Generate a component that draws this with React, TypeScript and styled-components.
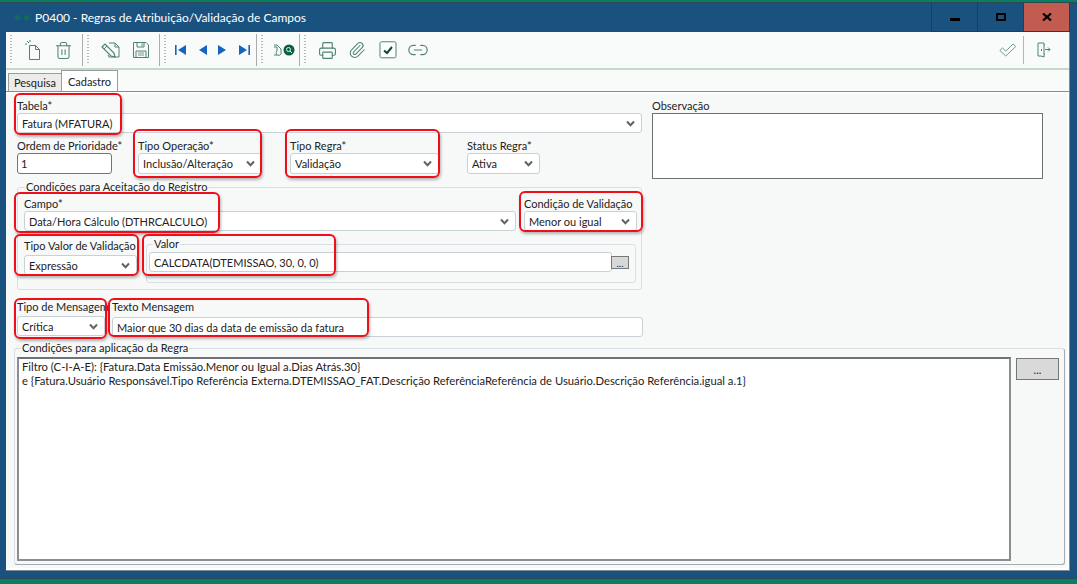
import React from "react";
import styled, { createGlobalStyle } from "styled-components";
import { Trash2, Printer, Paperclip, Link2 } from "lucide-react";

const Global = createGlobalStyle`
  html, body { margin: 0; padding: 0; }
  body { width: 1077px; height: 584px; overflow: hidden; background: #19527f; font-family: "Lato", "Liberation Sans", sans-serif; font-size: 11px; color: #222; }
  fieldset { margin: 0; min-width: 0; }
`;

const Shell = styled.div`
  width: 1077px; height: 584px; display: flex; flex-direction: column; background: #19527f;
`;
const TopStrip = styled.div`height: 2px; background: #0b7d63; border-bottom: 1px solid #2c4a50;`;
const BottomStrip = styled.div`height: 5px; background: #0b7d63; border-top: 1px solid #2c4a50;`;
const BottomSpacer = styled.div`height: 7px;`;
const TitleBar = styled.div`
  height: 29px; display: flex; align-items: center; padding-left: 15px; color: #fff; font-size: 12px;
`;
const Dots = styled.span`display: flex; gap: 4px; margin-right: 6px;`;
const Dot = styled.i`width: 5px; height: 5px; border-radius: 50%; background: #0d6f5b;`;
const Title = styled.span`flex: 1;`;
const WinButtons = styled.div`display: flex; height: 29px; margin-right: 7px; border-left: 1px solid #33383c; border-bottom: 1px solid #33383c; box-sizing: border-box;`;
const WinButton = styled.button<{ $close?: boolean }>`
  width: 46px; height: 28px; border: 0; border-right: 1px solid #33383c; padding: 0; display: flex; align-items: center; justify-content: center;
  background: ${(p) => (p.$close ? "#c25b50" : "#19527f")};
`;
const Frame = styled.div`
  flex: 1; margin: 0 7px 0 6px; background: #fff; display: flex; flex-direction: column; border-bottom: 1px solid #7d8a96; border-right: 1px solid #7d8a96; position: relative;
`;
const Toolbar = styled.div`
  height: 36px; background: #f9fbfa; display: flex; align-items: center; border-bottom: 2px solid #c6d8c6; box-sizing: content-box;
`;
const ToolGroup = styled.div<{ $w: number; $last?: boolean }>`
  width: ${(p) => p.$w}px; height: 32px; box-sizing: border-box; display: flex; align-items: center; padding-left: 4px;
  border-right: ${(p) => (p.$last ? "0" : "1px solid #a9adae")}; flex: none;
`;
const Grip = styled.span`
  width: 2px; height: 30px; margin-right: 5px; flex: none;
  background-image: linear-gradient(#b4b8b8 50%, transparent 50%); background-size: 2px 3px;
`;
const ToolIcon = styled.span<{ $w: number }>`
  width: ${(p) => p.$w}px; display: flex; justify-content: center; align-items: center; flex: none; color: #4f8371;
`;
const ToolSpacer = styled.div`flex: 1;`;
const RightTools = styled.div`display: flex; align-items: center; height: 32px; margin-right: 18px;`;
const ThinSep = styled.span`width: 1px; height: 28px; background: #b3b6b6; margin: 0 13px 0 6px;`;
const TabRow = styled.div`
  height: 21px; padding-left: 2px; background: #f9fbfa; display: flex; align-items: flex-end; border-bottom: 1px solid #8b8d90; box-sizing: content-box;
`;
const Tab = styled.div<{ $active?: boolean }>`
  box-sizing: border-box; display: flex; align-items: center; justify-content: center;
  width: ${(p) => (p.$active ? 57 : 54)}px; height: ${(p) => (p.$active ? 21 : 18)}px;
  background: ${(p) => (p.$active ? "#fff" : "#ececec")};
  border: 1px solid #9a9c9e; border-bottom: 0; margin-left: ${(p) => (p.$active ? -1 : 0)}px; position: relative; color: #222;
`;
const Panel = styled.div`
  flex: 1; background: #f7f9f9; margin: 2px 2px 2px 0; padding: 5px 0 0 7px; position: relative;
`;
const TopSection = styled.div`display: flex; padding-left: 4px;`;
const LeftCol = styled.div`width: 625px; flex: none;`;
const ObsCol = styled.div`margin-left: 10px;`;
const Row = styled.div<{ $mt?: number; $gap?: number; $pl?: number }>`
  display: flex; margin-top: ${(p) => p.$mt ?? 0}px; gap: ${(p) => p.$gap ?? 0}px; padding-left: ${(p) => p.$pl ?? 0}px;
`;
const Field = styled.div<{ $w?: number; $grow?: boolean; $ml?: number; $mt?: number }>`
  width: ${(p) => (p.$w ? `${p.$w}px` : "auto")}; ${(p) => (p.$grow ? "flex: 1;" : "flex: none;")}
  margin-left: ${(p) => p.$ml ?? 0}px; margin-top: ${(p) => p.$mt ?? 0}px;
`;
const Label = styled.label<{ $gap?: number }>`
  display: block; height: 14px; line-height: 14px; margin-bottom: ${(p) => p.$gap ?? 0}px; white-space: nowrap;
`;
const Box = styled.div<{ $h?: number; $radius?: number; $border?: string; $w?: number; $pad?: number }>`
  box-sizing: border-box; height: ${(p) => p.$h ?? 20}px; ${(p) => p.$w && `width: ${p.$w}px;`} background: #fff; display: flex; align-items: center; padding: 0 6px 0 ${(p) => p.$pad ?? 4}px; white-space: nowrap;
  border: 1px solid ${(p) => p.$border ?? "#c8d1d6"}; border-radius: ${(p) => p.$radius ?? 3}px; color: #222;
`;
const BoxText = styled.span`flex: 1; overflow: hidden;`;
const Observacao = styled.div`width: 391px; height: 66px; box-sizing: border-box; background: #fff; border: 1px solid #6d6f72;`;
const Group = styled.fieldset<{ $w: number; $h: number; $legendLeft: number; $ml?: number; $strong?: boolean }>`
  box-sizing: border-box; width: ${(p) => p.$w}px; height: ${(p) => p.$h}px; padding: 0; flex: none; margin-left: ${(p) => p.$ml ?? 0}px;
  border: 1px solid #d8dee1; border-radius: 3px;
  ${(p) => p.$strong && "border-right-color: #a6abae; border-bottom-color: #a6abae;"}
  & > legend { margin-left: ${(p) => p.$legendLeft}px; padding: 0 1px; height: 14px; line-height: 14px; }
`;
const ValorRow = styled.div`display: flex; align-items: flex-start; padding-left: 2px; margin-top: 1px;`;
const EllipsisSmall = styled.button`
  width: 18px; height: 13px; margin: 4px 0 0 -1px; box-sizing: border-box; background: #d8d8d8; border: 1px solid #777; padding: 0; font: inherit; font-size: 10px; line-height: 8px; color: #222;
  position: relative;
`;
const RuleBody = styled.div`display: flex; align-items: flex-start; padding: 2px 0 0 2px;`;
const RuleText = styled.div`
  width: 994px; height: 204px; box-sizing: border-box; background: #fff; border: 2px solid #8a8d92; border-top-color: #6f7276; padding: 1px 3px; line-height: 13.5px; font-size: 11.25px; flex: none;
`;
const EllipsisLarge = styled.button`
  width: 43px; height: 22px; margin: 1px 0 0 5px; box-sizing: border-box; background: #d9d9d9; border: 1px solid #777; padding: 0; font: inherit; color: #222;
`;
const Highlight = styled.div<{ $x: number; $y: number; $w: number; $h: number }>`
  position: absolute; left: ${(p) => p.$x}px; top: ${(p) => p.$y}px; width: ${(p) => p.$w}px; height: ${(p) => p.$h}px;
  box-sizing: border-box; border: 2px solid #ee0f1a; border-radius: 6px; box-shadow: 1px 2px 3px rgba(0,0,0,.28); pointer-events: none;
`;

const Chevron = () => (
  <svg width="9" height="7" viewBox="0 0 9 7"><path d="M1 1.5 4.5 5.2 8 1.5" fill="none" stroke="#5f6468" strokeWidth="2" /></svg>
);
const Select = ({ value, h }: { value?: string; h?: number }) => (
  <Box $h={h}><BoxText>{value}</BoxText><Chevron /></Box>
);
const stroke = { fill: "none", stroke: "#4f8371", strokeWidth: 1 } as const;

const NewDoc = () => (
  <svg width="20" height="22" viewBox="0 0 20 22" {...stroke}>
    <path d="M5.500 6.500h6l4 4v10h-10z" /><path d="M11.500 6.500v4h4" /><path d="M3 2l2 2M6 1v2M1 5h2" stroke="#2f8a6a" />
  </svg>
);
const EditDoc = () => (
  <svg width="20" height="20" viewBox="0 0 20 20" {...stroke}>
    <path d="M8 3h6l4 4v10H8l-1-2" /><path d="M14 3v4h4" /><path d="M1 7l3-3 9 9 1 4-4-1z" strokeWidth="1.2" /><path d="M3 9l3-3" />
  </svg>
);
const Floppy = () => (
  <svg width="16" height="16" viewBox="0 0 16 16" {...stroke}>
    <path d="M.5.5h12.500l2.500 2.500v12.500H.5z" /><path d="M4 .5v4.500h7V.5M9 1.500v2.500" /><path d="M3 15.500V9h10v6.500" />
    <path d="M5 11h6M5 13h6" strokeWidth=".8" />
  </svg>
);
const Tri = ({ dir, bar }: { dir: "l" | "r"; bar?: boolean }) => (
  <svg width="12" height="10" viewBox="0 0 12 10" fill="#1565c0">
    {dir === "l" ? <path d="M11 0v10L3 5z" /> : <path d="M1 0v10l8-5z" />}
    {bar && (dir === "l" ? <rect x="0" y="0" width="1.6" height="10" /> : <rect x="10.4" y="0" width="1.6" height="10" />)}
  </svg>
);
const Binoc = () => (
  <svg width="22" height="14" viewBox="0 0 22 14">
    <path d="M1 2h3l4 4v3a2.500 2.500 0 1 1-4-1V4H1M1 12h3" fill="none" stroke="#4f8371" />
    <circle cx="16" cy="7" r="5.500" fill="#0d5c48" />
    <circle cx="15.500" cy="6.500" r="2" fill="none" stroke="#cfe" strokeWidth="1" /><path d="M17 8l2 2" stroke="#cfe" />
  </svg>
);
const CheckSquare = () => (
  <svg width="18" height="18" viewBox="0 0 18 18">
    <rect x="1" y=".8" width="16" height="16" rx="1.500" fill="#fff" stroke="#4f8371" />
    <path d="M5 9.500 8 12l5-6" fill="none" stroke="#0d4a3a" strokeWidth="2" />
  </svg>
);
const HollowCheck = () => (
  <svg width="18" height="14" viewBox="0 0 18 14" fill="none" stroke="#6f9d8d" strokeWidth="1">
    <path d="M.800 7.500 3.500 5 6.800 8.200 14 1l2.700 2.500L6.800 13z" />
  </svg>
);
const ExitDoor = () => (
  <svg width="14" height="16" viewBox="0 0 14 16" {...stroke}>
    <path d="M1 1h6v14l-3-1H1zM7 3h1M7 12h1M8 7.500h5M11 5.500l2 2-2 2" /><path d="M4.500 7v2" />
  </svg>
);

const marks: [number, number, number, number][] = [
  [8, -1, 108, 42],
  [127, 35, 129, 49],
  [279, 35, 155, 49],
  [8, 98, 206, 41],
  [513, 97, 124, 41],
  [8, 140, 125, 42],
  [136, 140, 194, 42],
  [8, 204, 93, 41],
  [102, 204, 261, 39],
];

export default function App() {
  return (
    <Shell>
      <Global />
      <TopStrip />
      <TitleBar>
        <Dots><Dot /><Dot /></Dots>
        <Title>P0400 - Regras de Atribuição/Validação de Campos</Title>
        <WinButtons>
          <WinButton aria-label="Minimizar"><svg width="10" height="8"><rect y="5" width="10" height="3" fill="#000" /></svg></WinButton>
          <WinButton aria-label="Maximizar"><svg width="10" height="8"><rect x="1" y="1" width="8" height="6" fill="none" stroke="#000" strokeWidth="2" /></svg></WinButton>
          <WinButton $close aria-label="Fechar"><svg width="10" height="8"><path d="M1 .5l8 7M9 .5l-8 7" stroke="#000" strokeWidth="2.200" /></svg></WinButton>
        </WinButtons>
      </TitleBar>
      <Frame>
        <Toolbar>
          <ToolGroup $w={77}><Grip /><ToolIcon $w={34}><NewDoc /></ToolIcon><ToolIcon $w={24}><Trash2 size={19} strokeWidth={1.3} /></ToolIcon></ToolGroup>
          <ToolGroup $w={77}><Grip /><ToolIcon $w={34}><EditDoc /></ToolIcon><ToolIcon $w={26}><Floppy /></ToolIcon></ToolGroup>
          <ToolGroup $w={97}><Grip /><ToolIcon $w={20}><Tri dir="l" bar /></ToolIcon><ToolIcon $w={22}><Tri dir="l" /></ToolIcon><ToolIcon $w={20}><Tri dir="r" /></ToolIcon><ToolIcon $w={22}><Tri dir="r" bar /></ToolIcon></ToolGroup>
          <ToolGroup $w={43}><Grip /><ToolIcon $w={32}><Binoc /></ToolIcon></ToolGroup>
          <ToolGroup $w={140} $last><Grip /><ToolIcon $w={32}><Printer size={19} strokeWidth={1.4} /></ToolIcon><ToolIcon $w={28}><Paperclip size={18} strokeWidth={1.4} /></ToolIcon><ToolIcon $w={34}><CheckSquare /></ToolIcon><ToolIcon $w={26}><Link2 size={22} strokeWidth={1.3} /></ToolIcon></ToolGroup>
          <ToolSpacer />
          <RightTools>
            <ToolIcon $w={18}><HollowCheck /></ToolIcon>
            <ThinSep />
            <ToolIcon $w={14}><ExitDoor /></ToolIcon>
          </RightTools>
        </Toolbar>
        <TabRow>
          <Tab>Pesquisa</Tab>
          <Tab $active>Cadastro</Tab>
        </TabRow>
        <Panel>
          <TopSection>
            <LeftCol>
              <Field>
                <Label>Tabela*</Label>
                <Select value="Fatura (MFATURA)" />
              </Field>
              <Row $mt={6}>
                <Field $w={95}>
                  <Label>Ordem de Prioridade*</Label>
                  <Box $h={21} $border="#5c8268" $pad={3}>1</Box>
                </Field>
                <Field $w={124} $ml={26}>
                  <Label>Tipo Operação*</Label>
                  <Select value="Inclusão/Alteração" h={21} />
                </Field>
                <Field $w={149} $ml={28}>
                  <Label>Tipo Regra*</Label>
                  <Select value="Validação" h={21} />
                </Field>
                <Field $w={73} $ml={28}>
                  <Label>Status Regra*</Label>
                  <Select value="Ativa" h={21} />
                </Field>
              </Row>
            </LeftCol>
            <ObsCol>
              <Label>Observação</Label>
              <Observacao />
            </ObsCol>
          </TopSection>
          <Row $mt={1} $pl={4}>
            <Group $w={625} $h={110} $legendLeft={7}>
              <legend>Condições para Aceitação do Registro</legend>
              <Row $mt={3} $pl={6}>
                <Field $w={492}>
                  <Label>Campo*</Label>
                  <Select value="Data/Hora Cálculo (DTHRCALCULO)" />
                </Field>
                <Field $w={113} $ml={8}>
                  <Label>Condição de Validação</Label>
                  <Select value="Menor ou igual" />
                </Field>
              </Row>
              <Row $mt={6} $pl={6}>
                <Field $w={113} $mt={2}>
                  <Label $gap={2}>Tipo Valor de Validação</Label>
                  <Select value="Expressão" />
                </Field>
                <Group $w={490} $h={46} $legendLeft={6} $ml={9}>
                  <legend>Valor</legend>
                  <ValorRow>
                    <Box $w={463}>CALCDATA(DTEMISSAO, 30, 0, 0)</Box>
                    <EllipsisSmall>...</EllipsisSmall>
                  </ValorRow>
                </Group>
              </Row>
            </Group>
          </Row>
          <Row $mt={10} $pl={4}>
            <Field $w={88}>
              <Label $gap={2}>Tipo de Mensagem</Label>
              <Select value="Crítica" />
            </Field>
            <Field $w={531} $ml={7}>
              <Label $gap={3}>Texto Mensagem</Label>
              <Box>Maior que 30 dias da data de emissão da fatura</Box>
            </Field>
          </Row>
          <Row $mt={4} $pl={1}>
            <Group $w={1051} $h={224} $legendLeft={6} $strong>
              <legend>Condições para aplicação da Regra</legend>
              <RuleBody>
                <RuleText>
                  Filtro (C-I-A-E): {"{Fatura.Data Emissão.Menor ou Igual a.Dias Atrás.30}"}<br />
                  e {"{Fatura.Usuário Responsável.Tipo Referência Externa.DTEMISSAO_FAT.Descrição ReferênciaReferência de Usuário.Descrição Referência.igual a.1}"}
                </RuleText>
                <EllipsisLarge>...</EllipsisLarge>
              </RuleBody>
            </Group>
          </Row>
          {marks.map(([x, y, w, h], i) => (
            <Highlight key={i} $x={x} $y={y} $w={w} $h={h} />
          ))}
        </Panel>
      </Frame>
      <BottomSpacer />
      <BottomStrip />
    </Shell>
  );
}
